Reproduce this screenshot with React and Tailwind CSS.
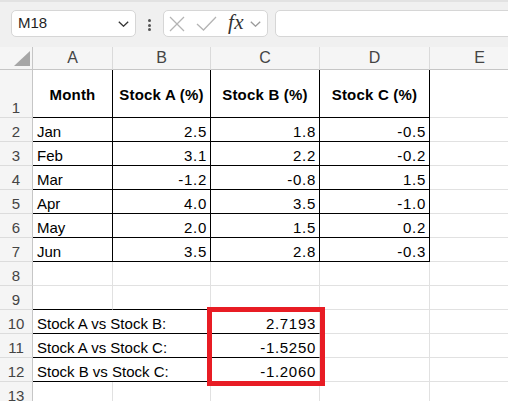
import React from "react";

const GRAY = "border-r border-b border-[#e1e1e1]";
const BLACK = "border-r border-b border-black";
const TXT = "flex items-end leading-[17px] pb-px text-[15px] whitespace-nowrap";
const NUM = "justify-end pr-[3px] tracking-[0.7px]";
const LEFT = "pl-[4px]";
const HEAD = "flex items-center justify-center pt-[3px] font-bold text-[15px] tracking-[0.2px]";

function RowHead({ n }) {
  return (
    <div className="bg-[#f5f5f5] border-r border-b border-r-[#c6c6c6] border-b-[#dcdcdc] flex items-end justify-center leading-[17px] pb-px text-[15px] text-[#444]">
      {n}
    </div>
  );
}

function ColHead({ c }) {
  return (
    <div className="bg-[#f5f5f5] border-r border-b border-r-[#dadada] border-b-[#c6c6c6] flex items-center justify-center text-[16px] text-[#444]">
      {c}
    </div>
  );
}

function Chevron({ className, color }) {
  return (
    <svg viewBox="0 0 11 6" className={className} fill="none">
      <polyline points="0.8,0.8 5.5,5.2 10.2,0.8" stroke={color} strokeWidth="1.3" />
    </svg>
  );
}

export default function App() {
  const data = [
    ["Jan", "2.5", "1.8", "-0.5"],
    ["Feb", "3.1", "2.2", "-0.2"],
    ["Mar", "-1.2", "-0.8", "1.5"],
    ["Apr", "4.0", "3.5", "-1.0"],
    ["May", "2.0", "1.5", "0.2"],
    ["Jun", "3.5", "2.8", "-0.3"],
  ];
  const corr = [
    ["Stock A vs Stock B:", "2.7193"],
    ["Stock A vs Stock C:", "-1.5250"],
    ["Stock B vs Stock C:", "-1.2060"],
  ];

  return (
    <div className="w-[508px] h-[401px] overflow-hidden bg-white font-['Liberation_Sans',Arial,sans-serif] text-black">
      {/* Formula bar */}
      <div className="h-[47px] bg-[#f0f0f0] border-t-2 border-[#e2e2e2] flex items-start pt-[8px] pl-[11px]">
        <div className="w-[125px] h-[27px] shrink-0 bg-white border border-[#d6d6d6] rounded-[5px] flex items-center justify-between pl-[6px] pr-[6px] text-[15px] text-[#1f1f1f]">
          <span>M18</span>
          <Chevron className="w-[11px] h-[6px]" color="#333" />
        </div>
        <div className="ml-[12px] mt-[9px] flex flex-col gap-[1.6px] shrink-0">
          <span className="w-[3px] h-[3px] rounded-full bg-[#555]" />
          <span className="w-[3px] h-[3px] rounded-full bg-[#555]" />
          <span className="w-[3px] h-[3px] rounded-full bg-[#555]" />
        </div>
        <div className="ml-[12px] w-[105px] h-[27px] shrink-0 bg-white border border-[#d6d6d6] rounded-[5px] flex items-center">
          <svg viewBox="0 0 16 16" className="ml-[5px] w-[16px] h-[16px]" fill="none">
            <line x1="1" y1="1" x2="15" y2="15" stroke="#b4b4b4" strokeWidth="1.3" />
            <line x1="15" y1="1" x2="1" y2="15" stroke="#b4b4b4" strokeWidth="1.3" />
          </svg>
          <svg viewBox="0 0 21 15" className="ml-[11px] w-[21px] h-[15px]" fill="none">
            <polyline points="1,8 7.5,14 20,1" stroke="#b4b4b4" strokeWidth="1.3" />
          </svg>
          <span className="ml-[11px] font-['Liberation_Serif',serif] italic font-normal text-[21px] leading-none text-[#333] tracking-[0.5px] pb-[2px]">
            fx
          </span>
          <Chevron className="ml-[6px] w-[11px] h-[6px]" color="#9a9a9a" />
        </div>
        <div className="ml-[7px] w-[260px] h-[27px] shrink-0 bg-white border border-[#d6d6d6] rounded-[5px]" />
      </div>

      {/* Sheet grid */}
      <div className="relative">
        <div className="grid grid-cols-[33px_80px_98px_109px_110px_100px] grid-rows-[23px_48px_repeat(13,24px)]">
          {/* header row */}
          <div className="bg-[#f5f5f5] border-r border-b border-[#c6c6c6] flex items-end justify-end pr-[2px] pb-[3px]">
            <svg viewBox="0 0 16 15" className="w-[16px] h-[15px]">
              <polygon points="16,0 16,15 0,15" fill="#a6a6a6" />
            </svg>
          </div>
          <ColHead c="A" />
          <ColHead c="B" />
          <ColHead c="C" />
          <ColHead c="D" />
          <ColHead c="E" />

          {/* row 1 */}
          <RowHead n={1} />
          <div className={`${BLACK} ${HEAD}`}>Month</div>
          <div className={`${BLACK} ${HEAD}`}>Stock A (%)</div>
          <div className={`${BLACK} ${HEAD}`}>Stock B (%)</div>
          <div className={`${BLACK} ${HEAD}`}>Stock C (%)</div>
          <div className={GRAY} />

          {/* rows 2-7 */}
          {data.map((r, i) => (
            <React.Fragment key={r[0]}>
              <RowHead n={i + 2} />
              <div className={`${BLACK} ${TXT} ${LEFT}`}>{r[0]}</div>
              <div className={`${BLACK} ${TXT} ${NUM}`}>{r[1]}</div>
              <div className={`${BLACK} ${TXT} ${NUM}`}>{r[2]}</div>
              <div className={`${BLACK} ${TXT} ${NUM}`}>{r[3]}</div>
              <div className={GRAY} />
            </React.Fragment>
          ))}

          {/* row 8 */}
          <RowHead n={8} />
          <div className={GRAY} />
          <div className={GRAY} />
          <div className={GRAY} />
          <div className={GRAY} />
          <div className={GRAY} />

          {/* row 9 */}
          <RowHead n={9} />
          <div className="border-r border-b border-r-[#e1e1e1] border-b-black" />
          <div className="border-r border-b border-r-[#e1e1e1] border-b-black" />
          <div className="border-r border-b border-r-[#e1e1e1] border-b-black" />
          <div className={GRAY} />
          <div className={GRAY} />

          {/* rows 10-12 */}
          {corr.map((r, i) => (
            <React.Fragment key={r[0]}>
              <RowHead n={i + 10} />
              <div className={`col-span-2 border-r border-b border-r-[#e1e1e1] border-b-black ${TXT} ${LEFT}`}>{r[0]}</div>
              <div className={`border-r border-b border-r-[#e1e1e1] border-b-black ${TXT} ${NUM}`}>{r[1]}</div>
              <div className={GRAY} />
              <div className={GRAY} />
            </React.Fragment>
          ))}

          {/* row 13 */}
          <RowHead n={13} />
          <div className={GRAY} />
          <div className={GRAY} />
          <div className={GRAY} />
          <div className={GRAY} />
          <div className={GRAY} />
        </div>

        {/* red highlight box */}
        <div className="absolute left-[207px] top-[260px] w-[118px] h-[79px] border-[5px] border-[#e81c24] pointer-events-none" />
      </div>
    </div>
  );
}
